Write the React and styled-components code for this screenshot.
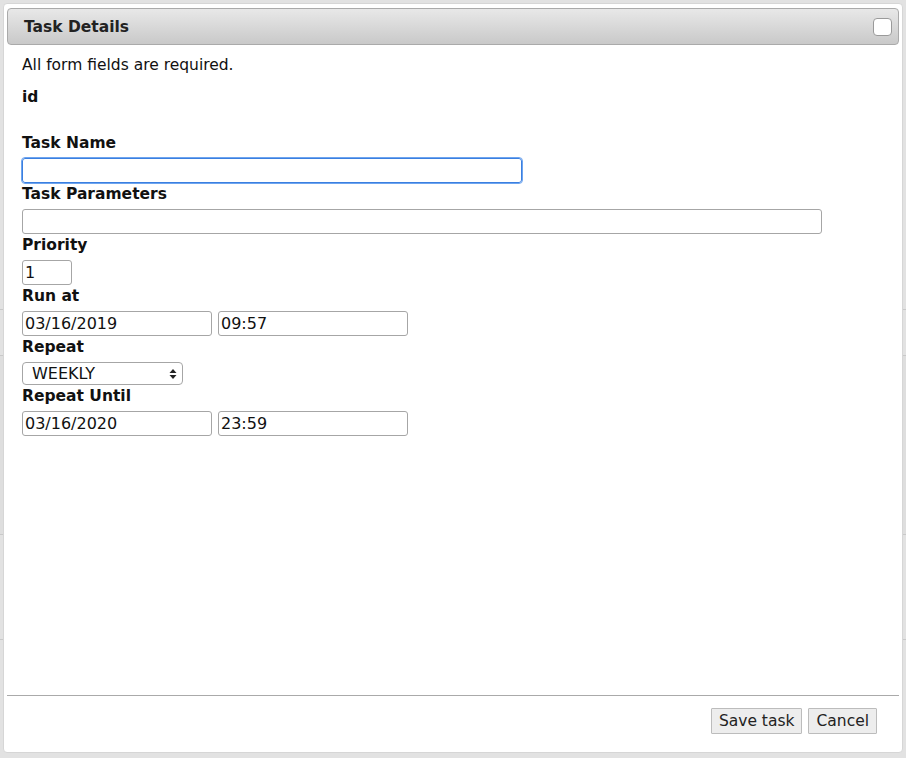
import React from "react";
import styled, { createGlobalStyle } from "styled-components";

const GlobalStyle = createGlobalStyle`
  html, body {
    margin: 0;
    padding: 0;
    background: #e2e2e2;
    font-family: "DejaVu Sans", Verdana, sans-serif;
  }
`;

const St = {
  Page: styled.div`
    position: relative;
    width: 906px;
    height: 758px;
    overflow: hidden;
    background: #e2e2e2;
  `,

  BgRow: styled.div`
    height: ${({ h }) => h}px;
    box-sizing: border-box;
    border-bottom: 1px solid ${({ line }) => line || "#c9c9c9"};
    background: ${({ bg }) => bg || "transparent"};
  `,

  Dialog: styled.div`
    position: absolute;
    top: 3px;
    left: 3px;
    width: 900px;
    height: 750px;
    box-sizing: border-box;
    display: flex;
    flex-direction: column;
    padding: 4px 3px;
    background: #fff;
    border: 1px solid #d6d6d6;
    border-radius: 4px;
    color: #111;
  `,

  TitleBar: styled.div`
    height: 37px;
    box-sizing: border-box;
    display: flex;
    align-items: center;
    justify-content: space-between;
    padding: 0 6px 0 16px;
    border: 1px solid #aaa;
    border-radius: 4px;
    background: linear-gradient(#e8e8e8, #c9c9c9);
  `,

  Title: styled.span`
    font-size: 15.5px;
    font-weight: bold;
    color: #222;
  `,

  CloseButton: styled.button`
    width: 19px;
    height: 18px;
    padding: 0;
    margin-top: 1px;
    background: #fff;
    border: 1px solid #9a9a9a;
    border-radius: 4px;
  `,

  Content: styled.div`
    flex: 1;
    padding: 11px 15px 0;
    font-size: 15.5px;
  `,

  Intro: styled.div`
    line-height: 18px;
    margin-bottom: 13px;
  `,

  Label: styled.label`
    display: block;
    font-weight: bold;
    line-height: 18px;
    padding-top: 1px;
    margin-bottom: 6px;
  `,

  EmptyValue: styled.div`
    height: 20px;
    margin-bottom: 1px;
  `,

  Field: styled.div`
    display: flex;
    gap: 6px;
    margin-bottom: 1px;
  `,

  Input: styled.input`
    width: ${({ w }) => w}px;
    height: 25px;
    box-sizing: border-box;
    margin: 0;
    padding: 0 2px;
    font-family: "DejaVu Sans", Verdana, sans-serif;
    font-size: 16px;
    color: #111;
    background: #fff;
    border: 1px solid ${({ focused }) => (focused ? "#3b7fe0" : "#a6a6a6")};
    border-radius: 3px;
    outline: ${({ focused }) => (focused ? "1px solid #6ea5ef" : "none")};
  `,

  SelectBox: styled.div`
    width: 161px;
    height: 23px;
    box-sizing: border-box;
    display: flex;
    align-items: center;
    justify-content: space-between;
    padding: 0 5px 0 9px;
    font-size: 16px;
    color: #111;
    background: #fff;
    border: 1px solid #a6a6a6;
    border-radius: 4px;
  `,

  Footer: styled.div`
    display: flex;
    justify-content: flex-end;
    gap: 6px;
    padding: 12px 22px 14px 0;
    border-top: 1px solid #aaa;
  `,

  Button: styled.button`
    height: 26px;
    padding: 0 ${({ pad }) => pad}px;
    font-family: "DejaVu Sans", Verdana, sans-serif;
    font-size: 15.5px;
    color: #222;
    background: #ededed;
    border: 1px solid #bcbcbc;
    border-radius: 1px;
  `,
};

const SelectArrows = () => (
  <svg width="8" height="12" viewBox="0 0 8 12">
    <path d="M4 1 L7.5 5 H0.5 Z" fill="#222" />
    <path d="M4 11 L7.5 7 H0.5 Z" fill="#222" />
  </svg>
);

const App = () => {
  return (
    <>
      <GlobalStyle />
      <St.Page>
        <St.BgRow h={310} />
        <St.BgRow h={46} />
        <St.BgRow h={179} bg="#dedede" />
        <St.BgRow h={105} />
        <St.BgRow h={118} line="transparent" />

        <St.Dialog>
          <St.TitleBar>
            <St.Title>Task Details</St.Title>
            <St.CloseButton aria-label="close" />
          </St.TitleBar>

          <St.Content>
            <St.Intro>All form fields are required.</St.Intro>

            <St.Label>id</St.Label>
            <St.EmptyValue />

            <St.Label>Task Name</St.Label>
            <St.Field>
              <St.Input w={500} focused defaultValue="" />
            </St.Field>

            <St.Label>Task Parameters</St.Label>
            <St.Field>
              <St.Input w={800} defaultValue="" />
            </St.Field>

            <St.Label>Priority</St.Label>
            <St.Field>
              <St.Input w={50} defaultValue="1" />
            </St.Field>

            <St.Label>Run at</St.Label>
            <St.Field>
              <St.Input w={190} defaultValue="03/16/2019" />
              <St.Input w={190} defaultValue="09:57" />
            </St.Field>

            <St.Label>Repeat</St.Label>
            <St.Field>
              <St.SelectBox>
                WEEKLY
                <SelectArrows />
              </St.SelectBox>
            </St.Field>

            <St.Label>Repeat Until</St.Label>
            <St.Field>
              <St.Input w={190} defaultValue="03/16/2020" />
              <St.Input w={190} defaultValue="23:59" />
            </St.Field>
          </St.Content>

          <St.Footer>
            <St.Button pad={7}>Save task</St.Button>
            <St.Button pad={7}>Cancel</St.Button>
          </St.Footer>
        </St.Dialog>
      </St.Page>
    </>
  );
};

export default App;
